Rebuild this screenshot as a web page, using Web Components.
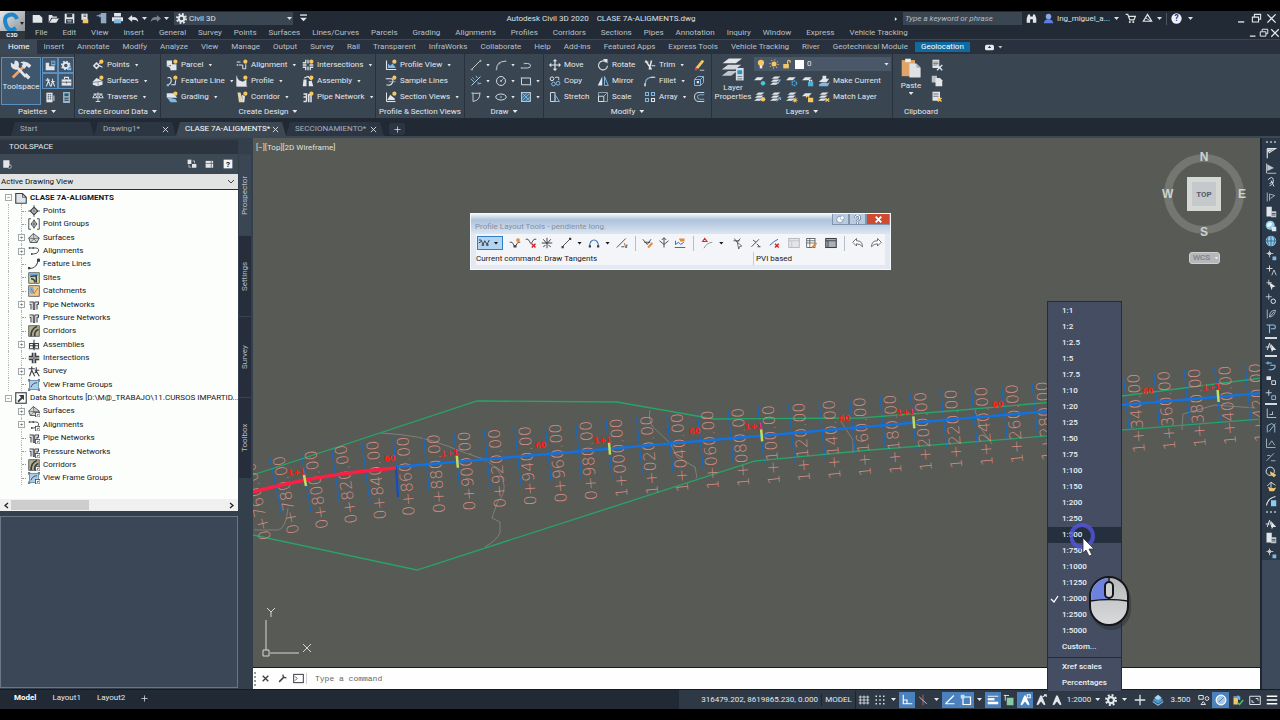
<!DOCTYPE html>
<html lang="en">
<head>
<meta charset="utf-8">
<title>Autodesk Civil 3D 2020</title>
<style>
html,body{height:100%;margin:0;background:#000}
body{font:8px/12px Roboto,"Open Sans","Noto Sans",sans-serif;color:#d5dae0;overflow:hidden}
</style>
</head>
<body>
<cad-app></cad-app>
<script>
const RESET = `*{box-sizing:border-box}button,input,select{font:inherit;color:inherit;background:none;border:0;padding:0;margin:0;outline:0;border-radius:0}
button{display:flex;align-items:center;cursor:pointer}select{appearance:none;cursor:pointer}a{color:inherit;text-decoration:none}`;

function define(name, css, html, after) {
  customElements.define(name, class extends HTMLElement {
    connectedCallback() {
      if (this.shadowRoot) return;
      const root = this.attachShadow({ mode: 'open' });
      root.innerHTML = `<style>${RESET}${css}</style>` + (typeof html === 'function' ? html(this) : html);
      if (after) after(this, root);
    }
  });
}

/* ---------- icons, 16 x 16 grid ---------- */
const L = '#e2e6ea', B = '#7fb9e6', G = '#f4c766', K = '#3c4046', R = '#d8262c';
const s = (d, c = L, w = 1.4) => `<path d="${d}" fill="none" stroke="${c}" stroke-width="${w}"/>`;
const f = (d, c = L) => `<path d="${d}" fill="${c}"/>`;
const star = `<circle cx="12.5" cy="3.5" r="2.8" fill="${G}"/>`;
const stack = f('M6 2h8l-4 3H2z') + f('M5 6h8l-4 3H1z') + f('M4 10h8l-4 3H0z');
const ann = c => f('M7 2h2l5 12-2 1-4-5-4 5-2-1z', c);
const pipe = (c = K) => s('M2 4h5v10M4 14V7H2M9 4h5v3h-2v7M9 14V4M7 14h2', c);
const sht = `<rect x="10" y="10" width="6" height="6" fill="#fff" stroke="${K}"/>` + s('M12 14l2-2', K);
const ICONS = {
  new: f('M1 3h10l4 4v7H1z') , open: f('M1 14V3h5l1 2h6v2H5z') + f('M6 8h10l-4 6H2z'),
  save: f('M1 1h14v14H1z') + f('M4 1h8v5H4zM3 9h10v6H3z', '#2b3540') + s('M5 11h6M5 13h6', L, 1),
  saveas: f('M2 1h9v9H2z') + f('M4 8l8 1v6H4z', G) + s('M5 3h4M5 5h4', '#2b3540', 1),
  cloud: f('M7 0h8v15H7z', '#93a9bd') + s('M1 4h6M5 2l3 2-3 2', B, 1.5),
  print: f('M3 0h10v5H3zM0 6h16v6H0z') + f('M3 9h10v6H3z', B),
  undo: f('M0 8l6-5v3q8-1 9 7-3-4-9-3v3z'), redo: f('M16 8l-6-5v3q-8-1-9 7 3-4 9-3v3z', '#76818d'),
  gear: `<circle cx="8" cy="8" r="4" fill="none" stroke="${L}" stroke-width="3"/><circle cx="8" cy="8" r="6.5" fill="none" stroke="${L}" stroke-width="3" stroke-dasharray="2.6 2.5"/>`,
  customize: s('M3 3h10', L, 2) + f('M3 7h10l-5 5z'), tri: f('M5 3l6 5-6 5z'),
  binoc: f('M1 14V8l2-6h3v12zM10 14V2h3l2 6v6zM6 5h4v4H6z'),
  user: `<circle cx="8" cy="5" r="4" fill="#86a6ee"/>` + f('M1 15q1-5 5-6h4q4 1 5 6z', '#5b7fe0'),
  cart: s('M1 2h3l3 8h6l2-5H5', L, 1.8) + `<circle cx="7" cy="13" r="1.5" fill="${L}"/><circle cx="12" cy="13" r="1.5" fill="${L}"/>`,
  a360: s('M8 2l6 10H2z', L, 1.8) + s('M5 7l8 5', L, 1.2),
  help: `<circle cx="8" cy="8" r="7.5" fill="#eef1f8"/><text x="8" y="12" font-size="12" font-weight="700" text-anchor="middle" fill="#2a3a86">?</text>`,
  min: s('M3 13h9', L, 2), restore: s('M5 5V2h9v7h-3M2 6h9v7H2z', L, 1.6), close: s('M2 2l12 12M14 2L2 14', L, 2),
  tools: s('M4 27L22 9', '#eaa46c', 4) + s('M3 9a6 6 0 0 0 8 4l12 13', L, 4) + f('M1 5l5 3 1-6q6 0 6 6t-6 6q-6-2-6-9z') + f('M15 5q8-4 16 4l-3 4-4-3-3 4-4-4 2-3z') + s('M22 22l6 6', L, 5),
  p1: f('M1 4h5v11H1zM6 9h8v6H6z') + f('M9 1h6v7H9z', B) + s('M10 3h4M10 5h4', '#2c3b4d', 1), p2: `<circle cx="7" cy="8" r="4" fill="none" stroke="${L}" stroke-width="3"/><circle cx="7" cy="8" r="6" fill="none" stroke="${L}" stroke-width="2" stroke-dasharray="2.4 2.3"/>` + f('M10 11h5v4h-5z', B),
  p3: s('M4 3v4M2 15l3-8 3 8M1 6h6M11 4v3l-2 8M11 7l3 8M9 8h5', L, 1.5), p4: f('M1 5h14v9H1z') + s('M5 5V2h6v3', L, 1.5) + s('M1 9h14M8 8v3', '#2c3b4d', 1),
  p5: f('M2 1h9v14H2z') + s('M4 4h2M7 4h2M4 7h2M7 7h2M4 10h2M7 10h2', '#2c3b4d', 1.4) + s('M13 5v8', L), p6: f('M3 0h10v16H3z', '#9cb7c9') + f('M5 2h6v4H5z', '#1d5f7a') + s('M5 9h6M5 12h6', '#20303c', 1.4),
  points: f('M6 4l5 5-5 5-5-5z') + `<circle cx="6" cy="9" r="1.6" fill="#38444f"/>` + s('M9 6l5-2M10 9l4 2') + star,
  surf: f('M1 9l5-5 8 4v5l-7 2-6-2z') + s('M1 10l7-1 6-1M8 9v5', '#55616c', .8) + star,
  trav: s('M2 4h12M8 2v12M5 14h6M4 4l-3 5h6zM12 4l-3 5h6z', L, 1.2),
  parcel: f('M1 2h7v6H1zM6 7h8v8H7z') + s('M1 9q6 0 6 6', L, 2) + star, feat: s('M2 4q5-2 5 3t-5 6M7 13h5l1-6', L, 1.4) + f('M1 12h3v3H1z', B) + star,
  grading: f('M1 3h9l5 6H1z') + f('M1 8l12 3 2 4H6z', B) + star,
  align: s('M1 4h5M4 8h5v5M9 13h4V7', L, 1.3) + f('M1 7h2v2H1z') + star, prof: f('M1 15V3l3 4 5 2 5-3v9z') + s('M1 1v14h14', L, 1) + star,
  corr: f('M2 2h4l4 13H4z', '#e4d6a8') + f('M8 5l4 2-1 8h-2z', L) + star,
  inter: s('M8 1v5M8 10v5M1 8h5M10 8h5M5 1v4H1M5 15v-4H1M11 15v-4h4', L, 1.7) + star, assem: f('M2 6h4v9H1zM9 8h4l2 7H9z') + s('M3 4l5-2 5 5', L, 1.5) + star,
  pipen: s('M2 4h4v10M2 8h4M9 15V5h3v10M2 14h4', L, 2) + star,
  pview: s('M2 2v12h13', L, 1.5) + f('M4 12V6l3 3 3-3 4 5v1z', B) + star, sline: s('M1 5h7q4 0 2 5t-8 3', L, 1.4) + s('M5 9h9', '#b8bfc6', 1) + star, sview: s('M2 14h12', L, 1.5) + f('M3 12l4-7 6 5v2z') + s('M2 2v12', L, 1.3) + star,
  line: s('M2 14L14 2', L, 1.1) + f('M1 13h3v2H1zM13 1h2v3h-2z', '#9ba8b4'), arc: s('M2 14Q2 3 14 3', L, 1.1) + f('M1 13h2v2H1zM13 2h2v2h-2zM5 5h2v2H5z', '#9ba8b4'), pline: s('M2 12h8q4 0 4-3t-4-3H6', L, 1.1) + f('M1 11h2v2H1zM5 5h2v2H5z', '#9ba8b4'),
  cline: s('M2 14L14 2', L, 1.1) + s('M1 5l5 5M8 1l2 3M10 12l5-1', B, 1.3) + s('M3 3l3 3M10 9l3 3', B, 1), circ: `<circle cx="8" cy="8" r="6" fill="none" stroke="${L}" stroke-width="1.2"/>` + s('M8 8l4-4', B, 1) + f('M7 7h2v2H7z'), rect: s('M2 4h12v9H2z', L, 1.2) + f('M1 3h2v2H1zM13 12h2v2h-2z', B),
  spl: s('M3 3h10q1 9-9 11V3', L, 1.1) + f('M2 2h2v2H2zM12 2h2v2h-2z', B), ell: `<ellipse cx="8" cy="8" rx="7" ry="4" fill="none" stroke="${L}" stroke-width="1.2"/>` + f('M7 7h2v2H7z', B), hatch: `<rect x="2" y="2" width="12" height="12" fill="#3f7299" stroke="${L}"/>` + s('M3 9l6-6M3 13L13 3M8 13l5-5M3 3l10 10', '#a8d2ef', .8),
  move: s('M8 2v12M2 8h12', L, 1.6) + f('M8 0l3 3H5zM8 16l3-3H5zM0 8l3-3v6zM16 8l-3-3v6z'), rotate: s('M12 4a6 6 0 1 0 2 5', L, 1.4) + f('M8 0h6v6z'), trim: s('M2 2l8 12M10 2L7 14', L, 2) + s('M1 4h5M10 9h5', L, 1.6), 
  erase: f('M3 12L12 1l3 2-8 10z', G) + f('M3 11l4 2-2 2H2z', '#e0444a') + s('M9 15h6', L, 1), copy: `<circle cx="4" cy="5" r="2.5" fill="none" stroke="${L}" stroke-width="1.3"/><circle cx="6" cy="12" r="2.5" fill="none" stroke="${B}" stroke-width="1.3"/><circle cx="12" cy="11" r="2.5" fill="none" stroke="${B}" stroke-width="1.3"/>` + s('M8 3h5v4', L, 1.2), mirror: f('M7 2v12H1z') + s('M10 2v12h5z', B, 1.3), fillet: s('M2 15V10Q2 3 13 3', B, 1.4) + s('M1 15v-4M9 3h6', L, 1.4),
  box3: s('M2 6h8v8H2zM2 6l4-4h8v8l-4 4M10 6l4-4', B, 1.3) + f('M5 8h3v3H5z'), stretch: s('M2 2h6v12H2z', L, 1.2) + s('M8 14V5l6 9z', B, 1.3), scale: s('M2 2h12v12H2z', '#9ba8b4', 1.2) + s('M2 7h7v7H2z', L, 1.2) + s('M9 7l4-4', B, 1.2), array: s('M2 2h4v4H2zM10 2h4v4h-4zM2 10h4v4H2z', B, 1.4) + s('M10 10h4v4h-4z', L, 1.4), offset: s('M15 2H8q-6 0-6 6t6 6h7', L, 1.2) + s('M15 5H9q-3 0-3 3t3 3h6', B, 1.2),
  layerbig: f('M10 2h17l-8 6H2z') + f('M9 10h17l-8 6H1z', '#d3d8dc') + f('M9 18h12l-8 6H1z', '#c0c6cb') + f('M19 14h10v16H19z', '#d3dde4') + f('M21 17h6v5h-6z', '#2a8fc4') + s('M21 25h6M21 28h6', '#56636e', 1),
  l1: f('M4 3h9l-4 4H0z') + `<circle cx="12" cy="11" r="3" fill="#49c4d8"/>`, l2: stack + s('M10 12l4-6', B, 1.6), l3: f('M4 3h9l-4 4H0z') + `<circle cx="11" cy="11" r="3" fill="none" stroke="#49a4d8" stroke-width="2" stroke-dasharray="2 1"/>` , l4: f('M4 3h9l-4 4H0z') + f('M8 9h7v6H8z', '#49b4d8') + s('M10 9V7h3v2', L), l5: f('M6 1h5v5H6z') + f('M1 9l5-4h9l-4 5z') + f('M1 13l4-3 8 1 3-2-3 6H2z', B),
  m1: stack + `<circle cx="12" cy="11" r="3" fill="${G}"/>`, m2: stack + s('M9 14l5-5M11 9h3v3', B, 1.3), m3: stack + `<circle cx="12" cy="12" r="2.5" fill="${G}"/><circle cx="12" cy="12" r="3.5" fill="none" stroke="${G}" stroke-dasharray="1 1.7"/>`, m4: f('M4 3h9l-4 4H0z') + f('M8 9h7v6H8z', G) + s('M6 9V7h3v2', G), m5: stack + s('M10 10l5 4M15 10l-5 4', G, 2),
  bulb: `<circle cx="8" cy="6" r="5" fill="${G}"/>` + f('M6 10h4v5H6z', '#eee'), sun: `<circle cx="8" cy="8" r="4" fill="${G}"/><circle cx="8" cy="8" r="6.5" fill="none" stroke="${G}" stroke-width="2" stroke-dasharray="1.3 3.8"/>`, unlock: f('M2 8h9v7H2z', G) + s('M9 8V3q2-2 4 0v3', G, 1.8),
  paste: f('M1 3h19v23H1z', '#dea468') + f('M6 1h8v5H6z', '#eceff2') + f('M12 8h10l6 6v14H12z', '#dfe3e6') + f('M22 8v6h6z', '#a4adb5'), cut: f('M2 1h9v11H2z') + s('M3 4h7M3 6h7M3 8h7', '#47525c', .9) + s('M8 8l7 7M15 8l-7 7', L, 1.8), copy2: f('M1 1h7v9H1z', '#b9c1c8') + f('M6 4h6l3 3v8H6z'), cut2: f('M2 1h10v12H2z') + s('M3 4h7M3 7h7', '#47525c', 1) + s('M9 9l5 5M14 9l-5 5', G, 2),
  tdoc: `<path d="M1 2h9l5 5v8H1z" fill="#dfe3ea" stroke="${K}" stroke-width="1.5"/>` + s('M10 2v5h5', K, 1), tpt: `<path d="M8 3l5 5-5 5-5-5z" fill="none" stroke="${K}" stroke-width="1.5"/>` + s('M8 0v16M0 8h16', K, 1), tpg: s('M4 1H1v14h3M12 1h3v14h-3M8 3l4 5-4 5-4-5zM8 2v12M4 8h8', K, 1.2), tsf: `<path d="M1 8l6-6 8 6-3 6H3z" fill="#d5d9d6" stroke="${K}" stroke-width="1.1"/>` + s('M1 8l7 1 7-1M7 2l1 7-5 5M8 9l4 5', K, .8), tal: s('M2 4h8q5 0 4 4t-7 4H4', K, 1.2) + f('M1 3h2v2H1zM6 3h2v2H6zM4 11h2v2H4z', K), tfl: s('M1 14q11 1 13-13', K, 1.4) + f('M12 1h4v4h-4zM0 12h3v3H0z', K),
  tsi: `<rect x="1" y="1" width="14" height="14" fill="#cfd6a0" stroke="${K}"/>` + f('M2 2h12v3H2z', '#63a6dc') + s('M3 6l8-1v9M4 9q5 0 5 5', K, 2), tca: `<rect x="1" y="1" width="14" height="14" fill="#f5c98a" stroke="${K}"/>` + f('M2 3q5-3 6 3t-3 6-3-9z', '#7ab4dd') + s('M8 12l5-8M4 5l4 6', '#a5632e', 1), tpi: pipe(), tpr: pipe(), tco: `<rect x="1" y="1" width="14" height="14" fill="#b6b08a" stroke="${K}"/>` + s('M4 15Q4 5 12 2M9 15Q8 8 14 6', K, 2.2), tas: s('M8 1v14M1 13h14M2 12V6h5v6M9 12V6h5v6M2 9h12', K, 1.4), tin: s('M6 1v5H1M10 1v5h5M6 15v-5H1M10 15v-5h5', K, 2) + s('M8 1v14M1 8h14', K, 1), tsv: s('M5 2v4M2 15l3-8 4 8M1 5h8M11 3v5l-2 3M11 8l4 7M9 7h6', K, 1.5), tvf: `<rect x="2" y="2" width="12" height="12" fill="#a9cdea" stroke="#4c7ea6"/>` + s('M0 4V1h3M13 1h3v3M0 12v3h3M13 15h3v-3M4 11q2-6 8-6', K, 1.2), tds: `<rect x="1" y="1" width="14" height="14" fill="#fff" stroke="${K}" stroke-width="1.5"/>` + s('M4 13l6-6', K, 2.4) + f('M5 4h7v7z', K),
  db: f('M2 2h10v8l-2 4H2z') + `<circle cx="12" cy="12" r="3" fill="none" stroke="${L}"/>`, tt1: f('M1 1h6v7H1z') + f('M8 8h7v6H8z') + s('M3 9v4h4M9 3h3v4', '#b9c1c8'), tt2: f('M1 3h12v11H1z') + s('M1 7h12M10 3v11', '#38444f', 1), tt3: f('M1 1h14v14H1z', '#f2f4f6') + `<text x="8" y="13" font-size="13" font-weight="700" text-anchor="middle" fill="#111">?</text>`,
  v: s('M1 4h3l3 6M12 10l3-6M7 10l2-5 3 5M1 8l3-2', K, 1.3) + f('M5 9h3v3H5zM11 9h3v3h-3z', '#44607a'), vadd: s('M1 7h3l4 6 4-6h3', K, 1.2) + f('M6 11h4v3H6z', K) + `<circle cx="12" cy="4" r="2.5" fill="#ef8a2c"/>`, vdel: s('M1 3h3l4 6 4-6h3', K, 1.2) + s('M9 9l5 5M14 9l-5 5', R, 2), vmv: s('M8 1v14M1 8h14M3 3l5 6 5-6M3 13l3-2M13 13l-3-2', K, 1.3),
  dl: s('M3 13L13 3', K, 1.2) + f('M2 12h3v3H2zM12 1h3v3h-3z', K), dc: s('M2 12Q3 4 8 4t6 8', '#2c6fb5', 1.4) + f('M1 11h3v3H1zM12 11h3v3h-3z', K), dconv: s('M1 14L13 2M7 13h4', K, 1.2) + s('M11 8l2 6h2', '#e07a2c', 1.5) + s('M13 14l2-4', '#2c6fb5', 1.5), vpen: s('M1 3l6 7 5-7M3 7h8', K, 1.2) + s('M8 14l6-6', '#e58b33', 2.5), vraise: s('M2 5l6 5 6-5M8 1v13M5 4l3-3 3 3', K, 1.2), vwave: s('M1 14h14M2 5v5l4-3 3 3 4-3', '#2c6fb5', 1.3) + s('M7 3h7M8 5h6', '#e58b33', 2),
  tanr: s('M2 6l3-4 3 4z', R, 1.5) + s('M4 15Q7 8 15 7', '#8e949a', 1.3), pick: s('M3 2l4 5 4-5M2 5h8', K, 1.1) + `<path d="M7 7l6 5-3 1-1 3z" fill="#fff" stroke="${K}"/>`, pvi2: s('M2 13L12 3M4 4l4 3M9 9l4 4M10 13h4', K, 1.2), pvix: s('M1 11l6-5 5-3', '#2c6fb5', 1.3) + s('M8 9l5 5M13 9l-5 5', R, 2), grid0: `<rect x="1" y="2" width="14" height="12" fill="#e3e5ea" stroke="#a5abb2"/>` + s('M1 5h14M5 5v9', '#bcc1c7', 1), gpen: `<rect x="1" y="2" width="11" height="12" fill="#fff" stroke="${K}"/>` + s('M1 5h11M1 8h11M5 2v12', K, .9) + s('M8 14l6-6', '#e58b33', 2.4), grid1: `<rect x="1" y="2" width="14" height="12" fill="#aab0b7" stroke="${K}" stroke-width="1.4"/>` + s('M1 5h14M4 5v9', K, 1.2), und: `<path d="M1 7l5-5v3q8 0 8 8-3-4-8-4v3z" fill="#fff" stroke="#555" stroke-width="1.1"/>`, red: `<path d="M15 7l-5-5v3q-8 0-8 8 3-4 8-4v3z" fill="#fff" stroke="#555" stroke-width="1.1"/>`,
  pinw: `<circle cx="7" cy="8" r="6" fill="#f1f4f8" stroke="#7d8ea3" stroke-width="1.5"/><circle cx="11" cy="5" r="3.5" fill="#fff" stroke="#7d8ea3"/>`, qw: `<path d="M4 5q0-4 4-4t4 4-4 5v1M8 13v3" fill="none" stroke="#4d5a6d" stroke-width="3.6"/><path d="M4 5q0-4 4-4t4 4-4 5v1M8 13v3" fill="none" stroke="#fff" stroke-width="1.8"/>`, closew: s('M3 3l10 10M13 3L3 13', '#fff', 3.4),
  r1: s('M3 2v13M3 2h11L5 8', L, 1.5) + f('M3 3h8L4 7z'), r2: s('M3 15h12', L, 1) + f('M3 3l9 5-9 4z', '#bcc5cd') + s('M2 2v13', L, 1), r3: s('M4 5q6-6 7 0t-5 8M8 6l4 8M6 10l5-2', L, 1.2), r4: s('M3 2v12M6 4l7 2-6 4M6 13V4', '#aeb8c1', 1.2), r5: f('M2 1h7v13H2z') + f('M8 7h7v8H8z', '#c3cbd2') + s('M9 10h5M9 12h5', '#2c3b4d', 1), r6: `<circle cx="7" cy="7" r="6" fill="#8ecbee"/>` + f('M3 5q4-4 7 0-2 5-7 4z', '#e8f4fb') + f('M9 9h6v6H9z', '#dfe5ea'), r7: `<circle cx="8" cy="8" r="7" fill="#8ecbee"/>` + s('M1 8h14M8 1v14M4 3q-3 5 1 10M12 3q3 5-1 10', '#28506e', 1),
  r8: s('M6 2v9M2 6h9M4 4l4 4M8 4L4 8', L, 1) + f('M10 10h5v5h-5z', B), r9: s('M6 2v8M2 6h8', L, 1.2) + s('M9 15l3-7 3 7', L, 1), r10: s('M5 1v7M2 5h7', L, 1) + f('M5 4l9 6-4 1-1 4z'), r11: s('M5 1v8M1 5h8', L, 1) + `<circle cx="11" cy="11" r="3" fill="none" stroke="${L}" stroke-width="1.3"/>`, r12: s('M3 2v12M6 12q0-9 8-9-1 8-8 9l6-7', '#bcc5cd', 1.1), r13: s('M2 4h10q3 1 1 5H8M6 4v11', '#8fc0e2', 1.5), r14: s('M3 12L6 3l3 9M1 8h5', L, 1.3) + f('M8 4l7 8-4 0-2 3z'), r15: s('M1 4h8M4 2v4M7 7h6q2 4-4 6H5', '#7fc6e4', 1.4), r16: f('M2 3h6v5H2z') + s('M9 9h5v5H9z', L, 1.2), r17: s('M5 1v8M1 5h8', L, 1.1) + s('M9 9h5v5H9z', B, 1.3), r18: s('M3 2v12h12M6 10h4V6', '#aeb8c1', 1.4), r19: s('M3 14V5l6-3 4 3v9M5 13L14 2', '#9fc3dc', 1.2), r20: s('M2 2v12h12M5 11l4-6 4 6', '#aeb8c1', 1.2), r21: s('M2 13L12 3M3 6h4M8 13h6', '#aeb8c1', 1.2), r22: `<circle cx="7" cy="7" r="5.5" fill="none" stroke="${L}" stroke-width="1.3"/>` + f('M7 7l8 5-3 3-5-4z', G), r23: s('M3 8l5-5 6 4M8 3v7', L, 1.2) + f('M4 9l7 2 4-1-3 5H6z', G), r24: s('M2 14Q4 4 14 2', L, 1.4) + f('M8 7h7v8H8z', '#8ecbee'),
  mdl: s('M3 2v12M8 2v12M13 2v12M1 4h14M1 8h14M1 12h14', L, 1.1), dots: [3, 8, 13].map(y => [3, 8, 13].map(x => f(`M${x - 1} ${y - 1}h2v2h-2z`)).join('')).join(''), ortho: s('M3 1v12h12M3 8h5v5', '#fff', 1.5), iso: s('M8 1v14', '#d05c54', 1.2) + s('M3 4l10 9', '#c9ced4', 1.2), ang: s('M2 13h12M2 13L13 2', '#fff', 1.6), osn: s('M4 4h10v10H4z', '#fff', 1.6) + f('M1 1h5v5H1z', '#bfe0fa'), lw: s('M1 3h14', '#fff', 1.2) + s('M1 7h9', '#fff', 3) + s('M1 12h14', '#fff', 3.4), trn: f('M5 5h9v10H5z', '#86c9a2') + s('M1 2h7M3 1v8', L, 1.2), a1: ann('#fff') + s('M11 1h4v4h-4z', '#fff'), a2: ann(L) + s('M10 4l5-3M12 1h3v3', L), a3: ann(L), plus: s('M8 1v14M1 8h14', L, 1.7), elev: f('M1 8l7-5 7 5-7 5z', '#4d9ad0') + f('M3 5l5-4 5 4-5 3z', '#a8d6f4') + s('M1 10l7 5 7-5', B), shapes: s('M1 2h6v5H1zM4 14l3-4 3 4z', L, 1.3) + `<circle cx="12" cy="6" r="2.5" fill="none" stroke="${L}" stroke-width="1.3"/>`, perf: `<circle cx="8" cy="8" r="6.5" fill="#a7c8e8" stroke="#fff" stroke-width="1.5"/>` + s('M5 11l7-7', '#4c7dae', 1.3), chk: f('M2 5h6v9H2z', G) + s('M2 4h8v4M8 2v5', '#6fb1e6', 2) + s('M7 11l3 3 5-6', '#4fc16a', 2), full: s('M1 3h14v11H1z', L, 1.3) + s('M4 11V8M4 11h3M12 6v3M12 6H9', L, 1.2), ham: s('M1 3h14M1 8h14M1 13h14', '#fff', 1.8),
  wr: s('M2 14l8-8', K, 2.6) + s('M9 1q-1 6 6 6', K, 2.4), x: s('M3 3l10 10M13 3L3 13', K, 2.4), cmd: `<rect x="1" y="2" width="14" height="12" fill="#fff" stroke="${K}" stroke-width="1.5"/>` + s('M3 5l3 3-3 3', K, 1.3), tcam: `<rect x="0" y="3" width="16" height="10" rx="3" fill="#e8ebee"/>` + f('M8 5l3 4H5z', '#30383f')
};
Object.assign(ICONS, { dsf: ICONS.tsf + sht, dal: ICONS.tal + sht, dpi: pipe() + sht, dpr: pipe() + sht, dco: ICONS.tco + sht, dvf: ICONS.tvf + sht });
const big = { tools: 32, layerbig: 32, paste: 30 };
define('cad-icon', ':host{display:block;flex:none;width:var(--icon,12px);height:var(--icon,12px)}svg{display:block;width:100%;height:100%}',
  el => { const n = el.getAttribute('n'), v = big[n] || 16; return `<svg viewBox="0 0 ${v} ${v}" aria-hidden="true">${ICONS[n] || ''}</svg>`; });
define('cad-caret', ':host{display:block;flex:none;width:5px;height:3px}i{display:block;width:100%;height:3px;background:currentColor;clip-path:polygon(0 0,100% 0,50% 100%)}', '<i></i>');
const ic = n => `<cad-icon n="${n}"></cad-icon>`;

/* ---------- header ---------- */
define('title-bar', `:host{display:flex;align-items:center;height:15px;color:#dde1e6;position:relative}
.qat{display:flex;gap:5px;padding-left:7px;align-items:center}.qat>cad-caret{margin:0 -2px}.ws{position:relative;display:flex;align-items:center;width:119px;height:13px;background:#3b4653;padding-left:2px;margin-left:2px}
.ws select{flex:1;padding-left:2px;height:13px}.ws cad-caret{margin-right:1px}.qat button{height:13px}.name{flex:1;display:flex;justify-content:center;gap:8px;white-space:nowrap}
.find{width:119px;height:13px;background:#3b4653;padding-left:2px;font-style:italic}.find::placeholder{color:#b4bbc3;opacity:1}
.right{display:flex;align-items:center;gap:4px}.sep{width:1px;height:12px;background:#4c5661}.user{gap:3px;margin-left:2px}.win{display:flex;gap:4px;margin-left:37px;padding-right:3px;--icon:11px}.qat,.right{--icon:11px}.sm{margin:0 2px}`,
`<div class="qat">${['new','open','save','saveas','cloud','print','undo'].map(n => `<button aria-label="${n}">${ic(n)}</button>`).join('')}<cad-caret></cad-caret><button aria-label="redo">${ic('redo')}</button><cad-caret></cad-caret>
<label class="ws">${ic('gear')}<select aria-label="Workspace"><option>Civil 3D</option></select><cad-caret></cad-caret></label><button aria-label="Customize">${ic('customize')}</button></div>
<div class="name"><span>Autodesk Civil 3D 2020</span><span>CLASE 7A-ALIGMENTS.dwg</span></div>
<div class="right"><cad-icon n="tri" style="--icon:6px"></cad-icon><input class="find" aria-label="Search" placeholder="Type a keyword or phrase"><button aria-label="Find">${ic('binoc')}</button>
<button class="user">${ic('user')}<span>Ing_miguel_a...</span></button><cad-caret></cad-caret><button class="sm" aria-label="Cart">${ic('cart')}</button><button aria-label="A360">${ic('a360')}</button><cad-caret></cad-caret><span class="sep"></span><button aria-label="Help">${ic('help')}</button><cad-caret class="sm"></cad-caret>
<div class="win">${['min','restore','close'].map(n => `<button aria-label="${n}">${ic(n)}</button>`).join('')}</div></div>`);

define('menu-bar', `:host{display:flex;align-items:center;height:13px;color:#b9c0c8}nav{display:flex;gap:12px;padding-left:10px;flex:1;white-space:nowrap}.wide{margin-right:3px}.win{display:flex;gap:1px;--icon:10px;color:#fff}`,
`<nav>${'File,Edit,View,Insert,General,Survey,Points,Surfaces,Lines/Curves,Parcels,Grading,Alignments,Profiles,Corridors,Sections,Pipes,Annotation,Inquiry,Window,Express,Vehicle Tracking'.split(',').map((t, i) => `<a href="#"${i < 4 || i > 8 && i < 14 || i > 17 ? ' class="wide"' : ''}>${t}</a>`).join('')}</nav>
<div class="win">${['min','restore','close'].map(n => `<button aria-label="Drawing ${n}">${ic(n)}</button>`).join('')}</div>`);

define('app-header', `:host{display:grid;grid-template-columns:25px 1fr;background:#222a35}.logo{grid-row:1/3;background:linear-gradient(135deg,#e4e6e8,#7e858b);position:relative;justify-content:center}svg{width:25px;height:28px;display:block}`,
`<button class="logo" aria-label="Application menu"><svg viewBox="0 0 25 28"><path d="M17 8Q15 2 9 4T6 14t10 3" fill="none" stroke="#1f86c8" stroke-width="4"/><path d="M20 11h4l-2 3z" fill="#222"/><rect y="20" width="25" height="8" fill="#30363c"/><text x="12" y="26" font-size="6" font-weight="700" text-anchor="middle" fill="#e8ecf0">C3D</text></svg></button><title-bar></title-bar><menu-bar></menu-bar>`);

define('ribbon-tabs', `:host{display:flex;gap:1px;height:15px;align-items:center;background:#28313d;border-top:1px solid #3d4753;color:#b9c0c8;white-space:nowrap}a{padding:0 6px;line-height:14px}a.on{background:#3b4854;color:#fff;padding:0 7px 0 8px}a.geo{background:#0e6a9f;color:#fff;line-height:10px;margin-right:14px}cad-caret{margin-left:3px}`,
`${'Home,Insert,Annotate,Modify,Analyze,View,Manage,Output,Survey,Rail,Transparent,InfraWorks,Collaborate,Help,Add-ins,Featured Apps,Express Tools,Vehicle Tracking,River,Geotechnical Module,Geolocation'.split(',').map((t, i) => `<a href="#" class="${i ? (t == 'Geolocation' ? 'geo' : '') : 'on'}">${t}</a>`).join('')}<cad-icon n="tcam" style="--icon:9px"></cad-icon><cad-caret></cad-caret>`);

/* ---------- ribbon ---------- */
define('tool-button', `:host{display:block;height:16px}button{height:16px;gap:3px;white-space:nowrap;color:#e4e8ec}cad-caret{width:4px;margin-left:2px}:host([only]) cad-caret{margin-left:1px}`,
  el => `<button aria-label="${el.getAttribute('label') || el.getAttribute('n')}">${ic(el.getAttribute('n'))}${el.hasAttribute('label') ? `<span>${el.getAttribute('label')}</span>` : ''}${el.hasAttribute('dd') ? '<cad-caret></cad-caret>' : ''}</button>`);
define('ribbon-panel', `:host{display:flex;flex-direction:column;border-right:1px solid #29323c;padding-top:3px;flex:none;color:#e4e8ec}.body{display:flex;height:48px}.t{display:flex;justify-content:center;align-items:center;gap:4px;height:13px;line-height:13px;white-space:nowrap}`,
  el => `<div class="body"><slot></slot></div><div class="t"><span>${el.getAttribute('heading')}</span>${el.hasAttribute('dd') ? '<cad-caret></cad-caret>' : ''}</div>`);
const tb = (n, label, dd = 1) => `<tool-button n="${n}"${label ? ` label="${label}"` : ' only'}${dd ? ' dd' : ''}></tool-button>`;
define('ribbon-bar', `:host{display:flex;height:64px;background:#394550}
.w75{width:75px}.w86{width:86px}.w215{width:215px}.w89{width:89px}.w79{width:79px}.w167{width:168px}.w182{width:181px}.w55{width:56px}
.g{display:grid;grid-auto-rows:16px;align-content:start}
.big{flex-direction:column;height:48px;align-items:center;line-height:9px;text-align:center}
.ts{width:40px;background:#3f566d;border:1px solid #5b8fbd;margin-left:1px;--icon:22px;padding-top:1px;gap:1px}
.pal{grid-template-columns:16px 16px;padding-left:1px}.pal button{justify-content:center;--icon:11px}.pal .on{border:1px solid #5b8fbd;background:#3f566d}
.gd{padding-left:17px}.cd{grid-template-columns:70px 66px 74px;padding-left:5px}.ps{padding-left:9px}.dr{grid-template-columns:25px 25px 27px;padding-left:5px}.md{grid-template-columns:48px 47px 49px 14px;padding-left:5px}
.lp{width:34px;--icon:25px;gap:1px;margin-left:4px}.layers{padding-left:4px;flex:1}
.combo{display:flex;align-items:center;background:#4a5768;height:14px;margin:0 1px 2px 0;padding:0 2px;gap:3px;--icon:10px}.combo i{width:9px;height:9px;background:#fff}.combo select{flex:1}
.row{display:flex;height:16px;gap:4px}.pst{width:28px;--icon:21px;gap:2px;margin-left:4px;padding-top:1px}.cb{padding-left:6px}`,
`<ribbon-panel heading="Palettes" dd class="w75"><button class="big ts">${ic('tools')}<span>Toolspace</span></button><div class="g pal">${['p1','p2','p3','p4','p5','p6'].map((n, i) => `<button class="${i < 4 ? 'on' : ''}" aria-label="Palette ${i + 1}">${ic(n)}</button>`).join('')}</div></ribbon-panel>
<ribbon-panel heading="Create Ground Data" dd class="w86"><div class="g gd">${tb('points','Points')}${tb('surf','Surfaces')}${tb('trav','Traverse')}</div></ribbon-panel>
<ribbon-panel heading="Create Design" dd class="w215"><div class="g cd">${tb('parcel','Parcel')}${tb('align','Alignment')}${tb('inter','Intersections')}${tb('feat','Feature Line')}${tb('prof','Profile')}${tb('assem','Assembly')}${tb('grading','Grading')}${tb('corr','Corridor')}${tb('pipen','Pipe Network')}</div></ribbon-panel>
<ribbon-panel heading="Profile &amp; Section Views" class="w89"><div class="g ps">${tb('pview','Profile View')}${tb('sline','Sample Lines',0)}${tb('sview','Section Views')}</div></ribbon-panel>
<ribbon-panel heading="Draw" dd class="w79"><div class="g dr">${tb('line')}${tb('arc')}${tb('pline','',0)}${tb('cline')}${tb('circ')}${tb('rect')}${tb('spl')}${tb('ell')}${tb('hatch')}</div></ribbon-panel>
<ribbon-panel heading="Modify" dd class="w167"><div class="g md">${tb('move','Move',0)}${tb('rotate','Rotate',0)}${tb('trim','Trim')}${tb('erase','',0)}${tb('copy','Copy',0)}${tb('mirror','Mirror',0)}${tb('fillet','Fillet')}${tb('box3','',0)}${tb('stretch','Stretch',0)}${tb('scale','Scale',0)}${tb('array','Array')}${tb('offset','',0)}</div></ribbon-panel>
<ribbon-panel heading="Layers" dd class="w182"><button class="big lp">${ic('layerbig')}<span>Layer<br>Properties</span></button><div class="layers"><label class="combo">${ic('bulb')}${ic('sun')}${ic('unlock')}<i></i><select aria-label="Layer"><option>0</option></select><cad-caret></cad-caret></label>
<div class="row">${tb('l1','',0)}${tb('l2','',0)}${tb('l3','',0)}${tb('l4','',0)}${tb('l5','Make Current',0)}</div><div class="row">${tb('m1','',0)}${tb('m2','',0)}${tb('m3','',0)}${tb('m4','',0)}${tb('m5','Match Layer',0)}</div></div></ribbon-panel>
<ribbon-panel heading="Clipboard" class="w55" style="border:0"><button class="big pst">${ic('paste')}<span>Paste</span><cad-caret></cad-caret></button><div class="g cb">${tb('cut','',0)}${tb('copy2','',0)}${tb('cut2','',0)}</div></ribbon-panel>`);

define('doc-tabs', `:host{display:flex;align-items:flex-end;height:20px;background:#212935;padding-left:11px;color:#aab2bb;border-bottom:2px solid #3b4854}
.tab{display:flex;align-items:center;justify-content:space-between;height:14px;padding:0 7px 0 9px;background:#2c3643;clip-path:polygon(4px 0,calc(100% - 4px) 0,100% 100%,0 100%)}
.tab.on{background:#3b4854;color:#fff}.w1{width:83px}.w2{width:82px}.w3{width:110px}.w4{width:98px}.tab button,.add{--icon:7px}.add{width:16px;height:12px;margin:0 0 1px 5px;justify-content:center;background:#2c3643;border-radius:3px}`,
`<div class="tab w1"><a href="#">Start</a></div><div class="tab w2"><a href="#">Drawing1*</a><button aria-label="Close">${ic('close')}</button></div><div class="tab on w3"><a href="#">CLASE 7A-ALIGMENTS*</a><button aria-label="Close">${ic('close')}</button></div><div class="tab w4"><a href="#">SECCIONAMIENTO*</a><button aria-label="Close">${ic('close')}</button></div><button class="add" aria-label="New tab">${ic('plus')}</button>`);

/* ---------- toolspace ---------- */
const TREE = [['tdoc','CLASE 7A-ALIGMENTS',0,'-'],['tpt','Points'],['tpg','Point Groups'],['tsf','Surfaces',1,'+'],['tal','Alignments',1,'+'],['tfl','Feature Lines'],['tsi','Sites'],['tca','Catchments'],['tpi','Pipe Networks',1,'+'],['tpr','Pressure Networks'],['tco','Corridors'],['tas','Assemblies',1,'+'],['tin','Intersections'],['tsv','Survey',1,'+'],['tvf','View Frame Groups'],['tds','Data Shortcuts [D:\\M@_TRABAJO\\11.CURSOS IMPARTID...',0,'-'],['dsf','Surfaces',1,'+'],['dal','Alignments',1,'+'],['dpi','Pipe Networks'],['dpr','Pressure Networks'],['dco','Corridors'],['dvf','View Frame Groups']];
define('tree-view', `:host{display:block;flex:1;background:#fcfefc;color:#14171b;overflow:hidden;padding-top:1px}ul{list-style:none;margin:0;padding:0;height:294px;display:grid;grid-auto-rows:1fr}
li{display:flex;align-items:center;gap:3px;padding-left:5px;white-space:nowrap;position:relative}li.c{padding-left:18px}li.b{font-weight:700}
li.c::before{content:"";position:absolute;left:21px;top:0;bottom:0;border-left:1px dotted #b4b8bb}li.c.u::after{content:"";position:absolute;left:8px;top:0;bottom:0;border-left:1px dotted #b4b8bb}
i{width:7px;height:7px;border:1px solid #a4a8ac;background:#fcfefc;font:6px/5px "Liberation Sans",sans-serif;text-align:center;color:#444;flex:none;position:relative;font-style:normal}i.n{border:0;border-top:1px dotted #999;height:0;margin-left:4px;width:4px;margin-right:-1px}`,
`<ul role="tree">${TREE.map(([n, t, l = 1, e], k) => `<li role="treeitem" class="${l ? 'c' : ''}${k < 15 ? ' u' : ''}${k ? '' : ' b'}"><i class="${e ? '' : 'n'}">${e === '+' ? '+' : e ? '−' : ''}</i>${ic(n)}<span>${t}</span></li>`).join('')}</ul>`);
define('tool-space', `:host{display:flex;flex:none;width:253px;background:#343f4c;padding-top:2px}
.main{width:238px;display:flex;flex-direction:column}.h{height:14px;background:#2b343f;padding-left:9px;color:#e4e8ec;line-height:13px}.bar{height:20px;display:flex;align-items:center;gap:8px;padding:0 5px 0 2px;background:#3c4854;--icon:10px}.bar span{flex:1}
.combo{display:flex;height:16px;background:#e2e4e4;color:#111;border-bottom:1px solid #26303a;padding:0 3px 0 1px;align-items:center}.combo select{flex:1;height:14px}.combo svg{width:8px;height:6px}
.sb{display:flex;justify-content:space-between;align-items:center;height:12px;background:#f0f0f0;padding:0 4px}.sb svg{width:5px;height:7px}.sb b{height:10px;width:78px;background:#cdcdcd;margin-right:auto;margin-left:2px}
.prev{height:172px;border:1px solid #6b7785;margin:5px 0 1px;background:#3b4757}tree-view{min-height:0}
.tabs{display:flex;flex-direction:column;margin:14px 0 0 1px;width:12px}.tabs button{height:81px;writing-mode:vertical-rl;transform:rotate(180deg);justify-content:center;background:#262e3b;border-bottom:1px solid #39434f;color:#b8bfc7;width:12px}.tabs .on{background:#3a4653}`,
`<div class="main"><div class="h">TOOLSPACE</div><div class="bar">${ic('db')}<span></span><button aria-label="Item view">${ic('tt1')}</button><button aria-label="Panorama">${ic('tt2')}</button><button aria-label="Help">${ic('tt3')}</button></div>
<label class="combo"><select aria-label="View"><option>Active Drawing View</option></select><svg viewBox="0 0 8 6"><path d="M1 1l3 3 3-3" fill="none" stroke="#444"/></svg></label>
<tree-view></tree-view><div class="sb"><svg viewBox="0 0 5 7"><path d="M4 1L1 3.500l3 2.500" fill="none" stroke="#222" stroke-width="1.300"/></svg><b></b><svg viewBox="0 0 5 7"><path d="M1 1l3 2.500L1 6" fill="none" stroke="#222" stroke-width="1.300"/></svg></div><div class="prev"></div></div>
<div class="tabs"><button class="on">Prospector</button><button>Settings</button><button>Survey</button><button>Toolbox</button></div>`);

/* ---------- drawing ---------- */
function stationing() {
  const name = m => Math.floor(m / 1000) + '+' + String(m % 1000).padStart(3, '0') + '.00';
  const bent = [[760, 266, 539, 12], [780, 294, 533, 11], [800, 323, 528, 9], [820, 352, 523, 8], [840, 381, 519, 6]];
  let ticks = 'M270 458L282 515M301 451L311 512M331 445L340 506M362 443L370 503', labels = '', yel = 'M304 475L306 486';
  bent.forEach(([m, x, y, a]) => { labels += `<text transform="translate(${x + 5} ${y}) rotate(${-90 - a})">${name(m)}</text>`; });
  for (let k = 0; k <= 28; k++) {
    const m = 860 + 20 * k, x = 396 + 30.43 * k, y = 467 - 2.63 * k;
    ticks += `M${x - 3} ${y - 29}L${x + 3} ${y + 28}`;
    labels += `<text transform="translate(${x + 18.5} ${y + 48.5}) rotate(-94.5)">${name(m)}</text>`;
    if (m % 100 === 0) yel += `M${x} ${y - 6}L${x + 1} ${y + 6}`;
  }
  return { ticks, labels, yel };
}
const ST = stationing();
const REDS = [[297,471,'1+1'],[390,457,'60'],[450,452,'1+1'],[541,444,'60'],[603,439,'1+1'],[695,430,'60'],[754,425,'1+1'],[845,417,'60'],[906,411,'1+1'],[998,403,'60'],[1148,390,'60'],[1212,386,'1+1']];
define('drawing-view', `:host{display:block;position:relative;flex:1;background:#585a55;overflow:hidden;min-height:0}svg{position:absolute;inset:0;width:100%;height:100%}.vp{position:absolute;left:3px;top:4px;color:#dfe2df}.st{font:200 16px "DejaVu Sans",sans-serif;fill:#d68d84}.rd{font:700 8px "DejaVu Sans",sans-serif;fill:#ff1c10;text-anchor:middle}
layout-tools{position:absolute;left:217px;top:75px}view-cube{position:absolute;right:14px;top:9px}`,
`<svg aria-label="Plan drawing"><g transform="translate(-253 -138)" fill="none">
<path d="M381 433q20 1 36 4t33 10 33 12q16 8 20 21t-6 23l-5 15 8 4v11q-3 7-15 14M254 530h24q8-1 10-22M650 410q-2 10 3 17l17 16 7 14 18 10 2 11M840 420l13 20v13M975 410l5 17 12 17M1182 430l1-16 32-9 40 3" stroke="#7d807b"/>
<path d="${ST.ticks}" stroke="#1c68b8" stroke-width="1.3"/>
<path d="M253 475L477 401L617 402L714 419L860 418L950 411L1122 396L1262 378M253 535L417 570L755 461L870 450L1262 419" stroke="#27a468" stroke-width="1.3"/>
<g class="st">${ST.labels}</g>
<path d="M396 467L1262 393" stroke="#1272e0" stroke-width="2.5"/><path d="M396 467L398 497" stroke="#1748c0" stroke-width="2"/><path d="M253 492Q320 474 396 468" stroke="#fb1f44" stroke-width="3.5"/>
<path d="${ST.yel}" stroke="#c5dc5a" stroke-width="2.5"/>
<g class="rd">${REDS.map(([x, y, t]) => `<text transform="translate(${x} ${y + 4}) rotate(-5)">${t}</text>`).join('')}</g>
<path d="M266 650V620M270 653H299M263 650h6v6h-6z" stroke="#d5d8d5"/><path d="M267 608l4 4 4-4M271 612v5M303 644l8 8M311 644l-8 8" stroke="#d5d8d5"/>
</g></svg><span class="vp">[−][Top][2D Wireframe]</span><layout-tools></layout-tools><view-cube></view-cube>`);

define('view-cube', `:host{display:block;width:84px;height:120px;font:700 12px "Liberation Sans",sans-serif}.c{position:relative;width:84px;height:94px;display:grid;grid-template-columns:1fr 36px 1fr;grid-template-rows:1fr 36px 1fr;place-items:center;color:#cfd1ce}.c::before{content:"";position:absolute;left:2px;top:7px;width:80px;height:80px;border-radius:50%;border:8px solid #747672;box-sizing:border-box}span{position:relative}.n{grid-area:1/2;align-self:start;line-height:20px}.w{grid-area:2/1;justify-self:start}.e{grid-area:2/3;justify-self:end}.s{grid-area:3/2;align-self:end;line-height:18px}
.t{grid-area:2/2;position:relative;width:34px;height:34px;background:#c6c9cb;border:5px solid #d6d8d6;color:#555c68;font:700 8px Roboto,sans-serif;justify-content:center}
.wcs{margin:11px 0 0 27px;width:31px;height:12px;border-radius:3px;background:#b5b7ba;color:#6f7479;font:8px/12px Roboto,sans-serif;padding-left:3px;gap:4px;border:1px solid #cfd0d2}.wcs cad-caret{color:#e4e5e6}`,
`<div class="c"><span class="n">N</span><span class="w">W</span><button class="t">TOP</button><span class="e">E</span><span class="s">S</span></div><button class="wcs">WCS<cad-caret></cad-caret></button>`);

define('layout-tools', `:host{display:block;width:421px;height:57px;background:#e3e9f3;border:1px solid #f4f7fb;color:#15181c}
.h{display:flex;height:20px;background:linear-gradient(#f0f5fa,#adc2dc 30%,#dce6f2);color:#8391a0;justify-content:space-between;padding-left:4px}.h span{line-height:25px}.h div{display:flex;height:11px;--icon:9px}.h button{width:17px;height:11px;justify-content:center;background:#b9cbe0;border:1px solid #8294ab;border-top:0}.h .x{width:24px;background:#cf4a30}
.bar{display:flex;align-items:center;height:18px;margin:0 5px;background:#f4f5f9;padding:0 1px;--icon:12px}.bar button{width:16px;height:15px;justify-content:center;flex:none}.bar .dd{width:12px}.on{display:flex;background:#b3d5f2;border:1px solid #2e7fc8;height:14px;align-items:center;width:26px;margin-right:4px}.bar .on button{width:12px;height:12px}.bar hr{width:1px;height:15px;border:0;background:#b9bdc5;margin:0 5px}
.st{display:grid;grid-template-columns:277px 1fr;height:13px;margin:0 5px;background:#f4f5f9}.st span{line-height:13px}.st span+span{border-left:1px solid #c6cad2;padding-left:2px}`,
`<div class="h"><span>Profile Layout Tools - pendiente long.</span><div><button aria-label="Pin">${ic('pinw')}</button><button aria-label="Help">${ic('qw')}</button><button class="x" aria-label="Close">${ic('closew')}</button></div></div>
<div class="bar"><div class="on"><button aria-label="Draw tangents">${ic('v')}</button><button aria-label="More"><cad-caret></cad-caret></button></div>${'vadd vdel vmv . dl ^ dc ^ dconv | vpen vraise vwave | tanr ^ . pick . pvi2 . pvix . grid0 . gpen . grid1 | und . red'.split(' ').map(n => n === '|' ? '<hr>' : n === '.' ? '<i style="width:3px"></i>' : n === '^' ? '<button class="dd" aria-label="More"><cad-caret></cad-caret></button>' : `<button aria-label="${n}">${ic(n)}</button>`).join('')}</div>
<div class="st"><span>Current command: Draw Tangents</span><span>PVI based</span></div>`);

define('command-line', `:host{display:flex;align-items:center;height:22px;background:#fdfefd;border-top:1px solid #151b24;color:#555;gap:4px;flex:none;--icon:9px}.g{width:3px;height:14px;border-left:2px dotted #999;margin-left:1px}input{flex:1;height:16px;padding-left:4px;font:8px "Liberation Mono",monospace}input::placeholder{color:#666;opacity:1}.p{--icon:11px;border-right:1px solid #ccc;padding:0 2px}`,
`<i class="g"></i><button aria-label="Close">${ic('x')}</button><span></span><button aria-label="Customize">${ic('wr')}</button><button class="p" aria-label="Recent commands">${ic('cmd')}</button><input aria-label="Command" placeholder="Type a command">`);

define('side-toolbar', `:host{display:block;width:20px;flex:none;background:#3c4a5c;border-left:2px solid #1d2631}div{height:422px;background:#2b3848;display:flex;flex-direction:column;align-items:center}button{flex:1;--icon:12px}.s{height:2px;width:12px;background:#d5dade;margin:1px 0}.g{height:2px;width:10px;border-top:2px dotted #8f9ba8;margin:3px 0}`,
`<div><i class="g"></i>${'1 2 3 4 5 6 7 8 9 10 11 12 13 | 14 | 15 16 17 | 18 19 20 21 22 23 24 : 14 5 8'.split(' ').map(n => n === '|' ? '<i class="s"></i>' : n === ':' ? '<i class="g"></i>' : `<button aria-label="Tool ${n}">${ic('r' + n)}</button>`).join('')}</div>`);

/* ---------- status ---------- */
const SCALES = '1:1 1:2 1:2.5 1:5 1:7.5 1:10 1:20 1:25 1:50 1:75 1:100 1:150 1:200 1:250 1:500 1:750 1:1000 1:1250 1:2000 1:2500 1:5000 Custom...'.split(' ');
define('scale-menu', `:host{display:block;width:75px;background:#444d62;border:1px solid #262d3a;border-bottom:0;color:#eef1f4;padding-top:1px;z-index:5}button{width:100%;height:16px;padding:1px 0 0 14px;position:relative;font-weight:500}.hot{background:#252f3e}hr{border:0;border-top:1px solid #242c39;margin:2px 0 1px}.ck{position:absolute;left:2px;width:9px;height:8px}
.ptr{position:absolute;left:22px;top:220px;width:64px;height:110px;pointer-events:none}`,
`${SCALES.map(t => `<button role="menuitem" class="${t === '1:500' ? 'hot' : ''}">${t === '1:2000' ? '<svg class="ck" viewBox="0 0 9 8"><path d="M1 4l3 3 4-6" fill="none" stroke="#fff" stroke-width="1.300"/></svg>' : ''}${t}</button>`).join('')}<hr><button role="menuitem">Xref scales</button><button role="menuitem">Percentages</button>
<svg class="ptr" viewBox="0 0 64 110" aria-hidden="true"><defs><linearGradient id="m" x2="0" y2="1"><stop stop-color="#b7b8ba"/><stop offset="1" stop-color="#d9dadb"/></linearGradient></defs>
<circle cx="12" cy="14" r="11" fill="none" stroke="#5154d8" stroke-width="4" opacity=".85"/><path d="M13 16v15l3-3 3 6 3-1-3-6h5z" fill="#fff" stroke="#333" stroke-width=".8"/>
<rect x="21" y="58" width="40" height="50" rx="20" fill="#222" opacity=".35"/><rect x="20" y="55" width="38" height="48" rx="19" fill="url(#m)" stroke="#15171b" stroke-width="2"/><path d="M38 56Q21 58 21 78l17-1z" fill="#6d82e0"/><path d="M20 79q19-3 38 0M39 55v6M39 75v3" fill="none" stroke="#15171b" stroke-width="1.5"/><rect x="35" y="60" width="8" height="16" rx="4" fill="#cfd0d2" stroke="#15171b" stroke-width="2"/></svg>`);
const si = (n, on) => `<button class="i${on ? ' on' : ''}" aria-label="${n}">${ic(n)}</button>`, sc = '<button class="c" aria-label="Options"><cad-caret></cad-caret></button>';
define('status-bar', `:host{display:flex;height:20px;flex:none;background:#212935;border-top:1px solid #151b24;color:#e4e8ec;white-space:nowrap}
nav{display:flex;flex:1;align-items:center;gap:16px;padding:0 0 3px 14px}nav b{font-weight:700;color:#fff}nav button{--icon:7px}.r{display:flex;align-items:center;background:#2f3946}.xy{width:143px;text-align:right;padding-right:3px;border-right:1px solid #1c232d}.m{width:34px;justify-content:center;border-right:1px solid #1c232d;height:18px}
.i{width:16px;height:16px;justify-content:center;--icon:12px}.on{background:#4b82be}.c{width:11px;height:16px;justify-content:center}.sc{position:relative}.sc>button{width:37px;height:18px;justify-content:center;gap:4px}scale-menu{position:absolute;left:-18px;bottom:100%}.end{display:flex;align-items:center}.end .i{width:17px}.e{width:29px;justify-content:center}.end .pl{width:19px;display:flex;justify-content:center}`,
`<nav><b>Model</b><a href="#">Layout1</a><a href="#">Layout2</a><button aria-label="New layout">${ic('plus')}</button></nav>
<div class="r"><span class="xy">316479.202, 8619865.230, 0.000</span><button class="m">MODEL</button>${si('mdl')}${si('dots')}${sc}${si('ortho',1)}${si('iso')}${sc}${si('ang',1)}${si('osn',1)}${sc}${si('lw',1)}${si('trn')}${si('a1',1)}${si('a2')}${si('a3')}
<div class="sc"><button>1:2000<cad-caret></cad-caret></button><scale-menu></scale-menu></div><div class="end">${si('gear')}${sc}<span class="pl">${si('plus')}</span>${si('elev')}<button class="e">3.500</button>${si('shapes')}${si('perf', 1)}${si('chk')}${si('full')}${si('ham')}</div></div>`);

define('cad-app', `:host{display:flex;flex-direction:column;height:100vh;padding:11px 0;box-sizing:border-box;background:#000}.main{flex:1;display:flex;min-height:0}.c{flex:1;display:flex;flex-direction:column;min-width:0}app-header,ribbon-tabs,ribbon-bar,doc-tabs{flex:none}`,
`<app-header></app-header><ribbon-tabs></ribbon-tabs><ribbon-bar></ribbon-bar><doc-tabs></doc-tabs><div class="main"><tool-space></tool-space><div class="c"><drawing-view></drawing-view><command-line></command-line></div><side-toolbar></side-toolbar></div><status-bar></status-bar>`);
</script>
</body>
</html>
